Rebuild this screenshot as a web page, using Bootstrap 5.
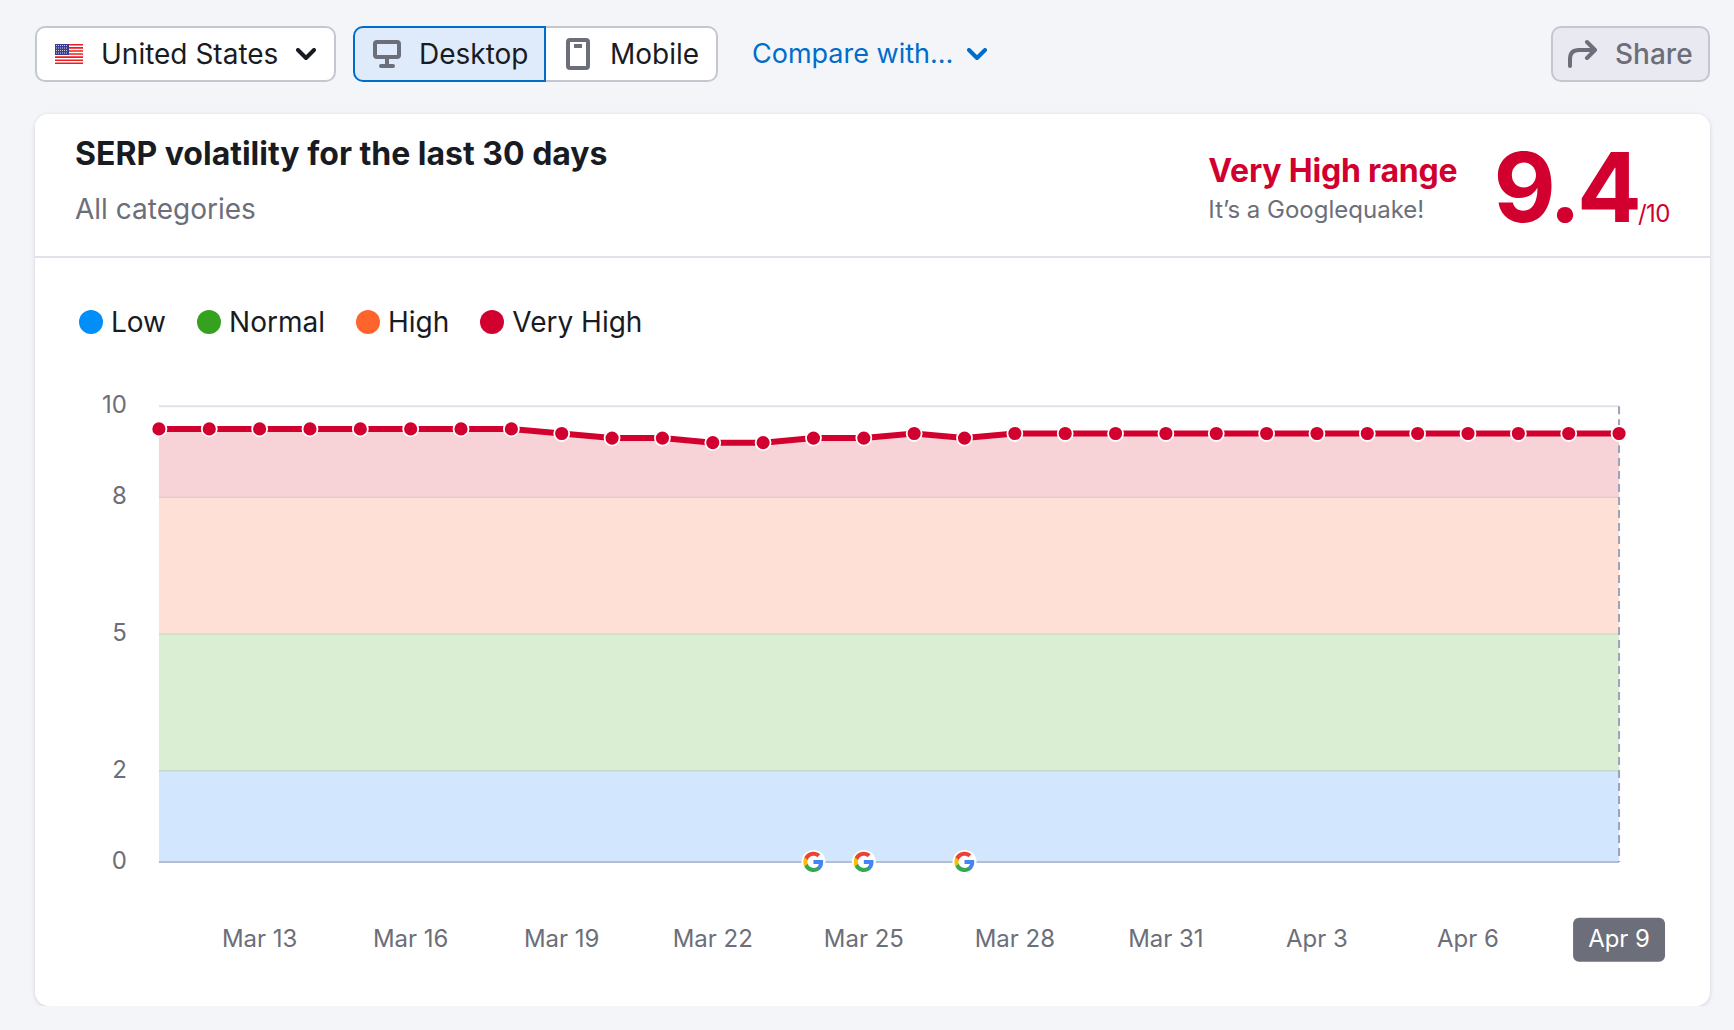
<!DOCTYPE html>
<html lang="en">
  <head>
    <meta charset="UTF-8" />
    <meta name="viewport" content="width=device-width, initial-scale=1.0" />
    <title>SERP volatility</title>
    <link
      href="https://cdn.jsdelivr.net/npm/bootstrap@5.3.0/dist/css/bootstrap.min.css"
      rel="stylesheet"
    />
    <style>
      body {
        background: #f4f5f9;
        font-family: Inter, "Liberation Sans", sans-serif;
        color: #191b23;
        padding: 26px 24px 0 35px;
      }
      .toolbar {
        height: 56px;
      }
      .tool-btn {
        height: 56px;
        display: flex;
        align-items: center;
        font-size: 28px;
        line-height: 1;
        color: #191b23;
        background: #fff;
        border: 2px solid #c4c7cf;
        border-radius: 10px;
        padding: 0;
      }
      .tool-btn:hover {
        color: #191b23;
        background: #fff;
        border-color: #c4c7cf;
      }
      .country {
        width: 301px;
        padding-left: 18px;
        gap: 18px;
      }
      .device {
        margin-left: 17px;
      }
      .device .tool-btn {
        gap: 18px;
      }
      .device .btn-desktop {
        width: 193px;
        padding-left: 18px;
        background: #dfeafa;
        border-color: #006dca;
        z-index: 1;
      }
      .device .btn-mobile {
        width: 173px;
        padding-left: 21px;
        gap: 20px;
        border-left: 0;
      }
      .compare {
        margin-left: 34px;
        gap: 14px;
        font-size: 27px;
        color: #006dca;
      }
      .share {
        width: 159px;
        margin-left: auto;
        padding-left: 14px;
        gap: 18px;
        color: #6c6e79;
        background: #e8e9f1;
        font-weight: 500;
      }
      .share:hover {
        color: #6c6e79;
        background: #e8e9f1;
      }
      .panel {
        margin-top: 32px;
        height: 892px;
        border: 0;
        border-radius: 14px;
        box-shadow: 0 1px 4px rgba(25, 27, 35, 0.16);
      }
      .panel-head {
        height: 144px;
        padding: 0 40px 0 40px;
        background: #fff;
        border-bottom: 2px solid #e0e1e9;
        border-radius: 14px 14px 0 0;
      }
      .panel-title {
        font-size: 32px;
        font-weight: 700;
        margin: 0;
        padding-top: 22px;
        line-height: 36px;
      }
      .panel-sub {
        font-size: 28px;
        line-height: 36px;
        margin-top: 19px;
        color: #6c6e79;
      }
      .range {
        padding-top: 6px;
      }
      .range-title {
        font-size: 32px;
        font-weight: 700;
        line-height: 40px;
        color: #d1002f;
        letter-spacing: -0.2px;
      }
      .range-sub {
        font-size: 24px;
        line-height: 32px;
        margin-top: 3px;
        color: #6c6e79;
      }
      .score {
        margin-left: 36px;
        padding-top: 4px;
        font-size: 96px;
        line-height: 1;
        font-weight: 700;
        color: #d1002f;
        letter-spacing: -4px;
      }
      .score small {
        font-size: 24px;
        font-weight: 400;
        letter-spacing: -0.5px;
      }
      .legend {
        padding: 46px 0 0 44px;
        font-size: 28px;
        line-height: 36px;
        gap: 31px;
      }
      .legend span {
        gap: 8px;
      }
      .legend i {
        width: 24px;
        height: 24px;
        border-radius: 50%;
      }
      .chart {
        width: 100%;
        height: 631px;
      }
      .chart text {
        font-family: Inter, "Liberation Sans", sans-serif;
        font-size: 24px;
        fill: #6c6e79;
      }
      .chart text.on-badge {
        fill: #fff;
      }
    </style>
  </head>
  <body>
    <div class="toolbar d-flex align-items-center">
      <button class="btn tool-btn country">
        <svg width="28" height="20" viewBox="0 0 28 20">
          <rect width="28" height="20" fill="#f01c1c" />
          <path d="M0 2.3h28M0 5.4h28M0 8.5h28M0 11.6h28M0 14.7h28M0 17.8h28" stroke="#fff" stroke-width="1.5" />
          <rect width="14" height="11" fill="#3c3b8f" />
          <path d="M1 1.5h12M1 4h12M1 6.5h12M1 9h12" stroke="#cfd0ea" stroke-width="1" stroke-dasharray="1 1" />
        </svg>
        <span>United States</span>
        <svg width="20" height="13" viewBox="0 0 20 13">
          <path d="M2 2l8 8 8-8" fill="none" stroke="#191b23" stroke-width="4" stroke-linecap="round" stroke-linejoin="round" />
        </svg>
      </button>
      <div class="btn-group device">
        <button class="btn tool-btn btn-desktop">
          <svg width="28" height="28" viewBox="0 0 28 28">
            <rect x="2" y="2" width="24" height="15" rx="2" fill="none" stroke="#6c6e79" stroke-width="4" />
            <path d="M14 19v5M8 26h12" stroke="#6c6e79" stroke-width="4" stroke-linecap="round" />
          </svg>
          <span>Desktop</span>
        </button>
        <button class="btn tool-btn btn-mobile">
          <svg width="24" height="32" viewBox="0 0 24 32">
            <rect x="2" y="2" width="20" height="28" rx="2" fill="none" stroke="#6c6e79" stroke-width="4" />
            <rect x="8" y="6" width="8" height="4" fill="#6c6e79" />
          </svg>
          <span>Mobile</span>
        </button>
      </div>
      <a class="compare d-flex align-items-center text-decoration-none" href="#">
        <span>Compare with…</span>
        <svg width="20" height="13" viewBox="0 0 20 13">
          <path d="M2 2l8 8 8-8" fill="none" stroke="#006dca" stroke-width="4" stroke-linecap="round" stroke-linejoin="round" />
        </svg>
      </a>
      <button class="btn tool-btn share">
        <svg width="30" height="30" viewBox="0 0 30 30">
          <path d="M3 27v-7c0-6 3-9 9-9h16M20 3l8 8-8 8" fill="none" stroke="#6c6e79" stroke-width="4" stroke-linecap="round" stroke-linejoin="round" />
        </svg>
        <span>Share</span>
      </button>
    </div>

    <div class="card panel">
      <div class="panel-head d-flex justify-content-between">
        <div>
          <h1 class="panel-title">SERP volatility for the last 30 days</h1>
          <div class="panel-sub">All categories</div>
        </div>
        <div class="d-flex align-items-center">
          <div class="range">
            <div class="range-title">Very High range</div>
            <div class="range-sub">It’s a Googlequake!</div>
          </div>
          <div class="score">9.4<small>/10</small></div>
        </div>
      </div>
      <div class="legend d-flex">
        <span class="d-flex align-items-center"><i style="background: #008ff8"></i>Low</span>
        <span class="d-flex align-items-center"><i style="background: #35a21f"></i>Normal</span>
        <span class="d-flex align-items-center"><i style="background: #ff642d"></i>High</span>
        <span class="d-flex align-items-center"><i style="background: #d1002f"></i>Very High</span>
      </div>
      <svg class="chart" id="chart" viewBox="35 340 1676 631"></svg>
    </div>

    <script>
      const values = [
        9.5, 9.5, 9.5, 9.5, 9.5, 9.5, 9.5, 9.5, 9.4, 9.3, 9.3, 9.2, 9.2, 9.3, 9.3,
        9.4, 9.3, 9.4, 9.4, 9.4, 9.4, 9.4, 9.4, 9.4, 9.4, 9.4, 9.4, 9.4, 9.4, 9.4,
      ];
      const dates = ["Mar 13", "Mar 16", "Mar 19", "Mar 22", "Mar 25", "Mar 28", "Mar 31", "Apr 3", "Apr 6"];
      const x0 = 159;
      const x1 = 1620;
      const stepX = (x1 - x0) / 29;
      const X = (i) => x0 + i * stepX;
      const Y = (v) => 862 - v * 45.6;

      const line = values.map((v, i) => `${X(i).toFixed(1)},${Y(v).toFixed(1)}`).join(" ");
      let svg = "";

      // Bands
      svg += `<rect x="${x0}" y="${Y(8)}" width="${x1 - x0}" height="${Y(5) - Y(8)}" fill="#ffe0d6"/>`;
      svg += `<rect x="${x0}" y="${Y(5)}" width="${x1 - x0}" height="${Y(2) - Y(5)}" fill="#daeed4"/>`;
      svg += `<rect x="${x0}" y="${Y(2)}" width="${x1 - x0}" height="${Y(0) - Y(2)}" fill="#d2e7fd"/>`;
      svg += `<polygon points="${x0},${Y(8)} ${line} ${x1},${Y(8)}" fill="#f7d3d8"/>`;

      // Grid
      svg += `<path d="M${x0} ${Y(10)}H${x1}" stroke="#e0e1e9" stroke-width="2"/>`;
      svg += `<path d="M${x0} ${Y(8)}H${x1}" stroke="#ecc7cd" stroke-width="1.5"/>`;
      svg += `<path d="M${x0} ${Y(5)}H${x1}" stroke="#cfdcc5" stroke-width="1.5"/>`;
      svg += `<path d="M${x0} ${Y(2)}H${x1}" stroke="#c3dac8" stroke-width="1.5"/>`;
      svg += `<path d="M${x0} ${Y(0)}H${x1}" stroke="#b4bdd2" stroke-width="2"/>`;
      svg += `<path d="M${x1} ${Y(10)}V${Y(0)}" stroke="#9aa3b8" stroke-width="2" stroke-dasharray="8 5"/>`;

      // Y axis
      [10, 8, 5, 2, 0].forEach((v) => {
        svg += `<text x="127" y="${Y(v) + 7}" text-anchor="end">${v}</text>`;
      });

      // X axis
      dates.forEach((d, i) => {
        svg += `<text x="${X(2 + i * 3)}" y="947" text-anchor="middle">${d}</text>`;
      });
      svg += `<rect x="1574" y="918" width="92" height="44" rx="6" fill="#6c6e79"/>`;
      svg += `<text class="on-badge" x="1620" y="947" text-anchor="middle">Apr 9</text>`;

      // Line and dots
      svg += `<polyline points="${line}" fill="none" stroke="#d1002f" stroke-width="6"/>`;
      values.forEach((v, i) => {
        svg += `<circle cx="${X(i)}" cy="${Y(v)}" r="7.5" fill="#d1002f" stroke="#fff" stroke-width="1.8"/>`;
      });

      // Google marks on the zero line
      [13, 14, 16].forEach((i) => {
        const s = 22 / 24;
        svg += `<g transform="translate(${X(i) - 12} ${Y(0) - 12})">
          <circle cx="12" cy="12" r="12" fill="#fff"/>
          <g transform="translate(1 1) scale(${s})">
            <path fill="#4285f4" d="M22.6 12.2c0-.8-.1-1.5-.2-2.2H12v4.3h5.9c-.3 1.4-1 2.5-2.2 3.3v2.8h3.6c2.1-1.9 3.3-4.8 3.3-8.2z"/>
            <path fill="#34a853" d="M12 23c3 0 5.5-1 7.3-2.7l-3.6-2.8c-1 .7-2.2 1.1-3.7 1.1-2.9 0-5.3-1.9-6.2-4.5H2.1v2.9C3.9 20.6 7.7 23 12 23z"/>
            <path fill="#fbbc05" d="M5.8 14.1c-.2-.7-.4-1.400-.4-2.100s.1-1.400.4-2.100V7H2.100C1.400 8.500 1 10.200 1 12s.4 3.500 1.100 5l3.700-2.900z"/>
            <path fill="#ea4335" d="M12 5.400c1.600 0 3.100.6 4.200 1.600l3.200-3.200C17.500 2.100 15 1 12 1 7.700 1 3.900 3.400 2.100 7l3.700 2.900C6.700 7.300 9.100 5.400 12 5.400z"/>
          </g>
        </g>`;
      });

      document.getElementById("chart").innerHTML = svg;
    </script>
    <script src="https://cdn.jsdelivr.net/npm/bootstrap@5.3.0/dist/js/bootstrap.bundle.min.js"></script>
  </body>
</html>
